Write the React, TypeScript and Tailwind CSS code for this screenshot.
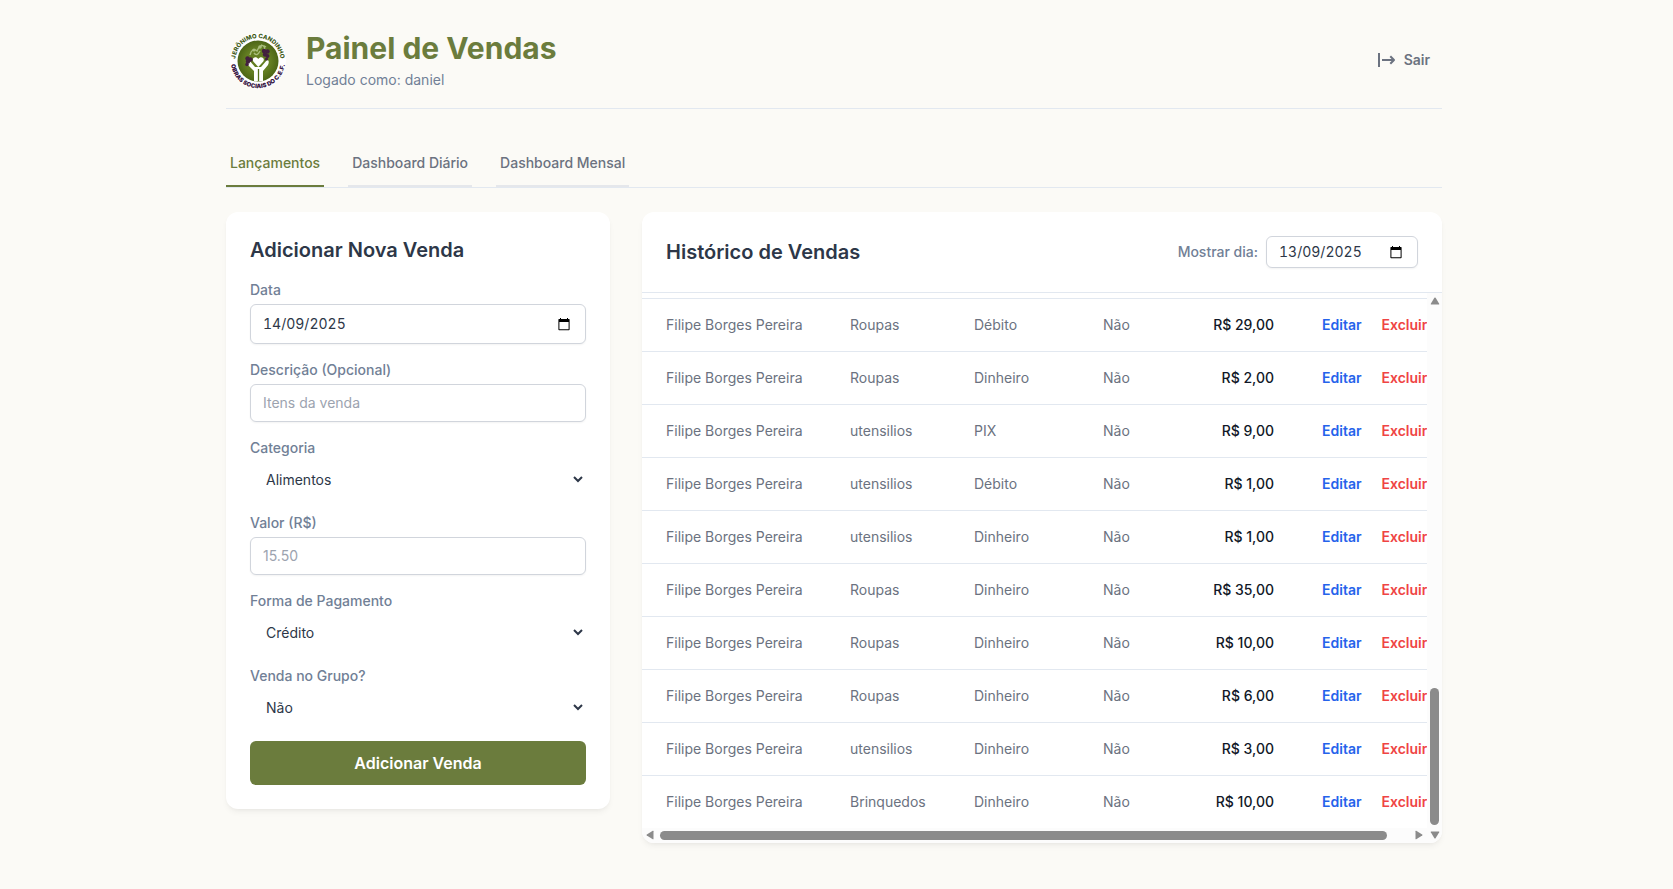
import type React from 'react';
import { useState } from 'react';
import clsx from 'clsx';

interface Sale {
  id: number;
  seller: string;
  category: string;
  payment: string;
  group: string;
  value: number;
}

const seller = 'Filipe Borges Pereira';

const sales: Sale[] = [
  { id: 1, seller, category: 'Roupas', payment: 'Débito', group: 'Não', value: 29 },
  { id: 2, seller, category: 'Roupas', payment: 'Dinheiro', group: 'Não', value: 2 },
  { id: 3, seller, category: 'utensilios', payment: 'PIX', group: 'Não', value: 9 },
  { id: 4, seller, category: 'utensilios', payment: 'Débito', group: 'Não', value: 1 },
  { id: 5, seller, category: 'utensilios', payment: 'Dinheiro', group: 'Não', value: 1 },
  { id: 6, seller, category: 'Roupas', payment: 'Dinheiro', group: 'Não', value: 35 },
  { id: 7, seller, category: 'Roupas', payment: 'Dinheiro', group: 'Não', value: 10 },
  { id: 8, seller, category: 'Roupas', payment: 'Dinheiro', group: 'Não', value: 6 },
  { id: 9, seller, category: 'utensilios', payment: 'Dinheiro', group: 'Não', value: 3 },
  { id: 10, seller, category: 'Brinquedos', payment: 'Dinheiro', group: 'Não', value: 10 },
];

const tabs = ['Lançamentos', 'Dashboard Diário', 'Dashboard Mensal'];

const formatPrice = (value: number): string => `R$ ${value.toFixed(2).replace('.', ',')}`;

function Logo(): React.ReactElement {
  return (
    <svg viewBox="0 0 64 64" className="size-16" role="img" aria-label="Jerônimo Candinho">
      <defs>
        <path id="logo-top" d="M9.6 36.5 A22.7 22.7 0 1 1 54.4 36.5" />
        <path id="logo-bottom" d="M5.2 36.5 A27 27 0 0 0 58.8 36.5" />
        <radialGradient id="logo-fill">
          <stop offset="60%" stopColor="#647e22" />
          <stop offset="100%" stopColor="#4c6516" />
        </radialGradient>
      </defs>
      <circle cx="32" cy="33" r="28" fill="#fff" />
      <circle cx="32" cy="33" r="20.5" fill="url(#logo-fill)" />
      {/* Hands */}
      <path
        d="M28 53 V43 L22 37 Q20 32 23 32 L29 39 H35 L41 32 Q44 32 42 37 L37 43 V53 Z"
        fill="#fff"
      />
      <path
        d="M32.3 39 L27.3 33.5 C25 30 30 27.5 32.3 31 C34.6 27.5 39.5 30 37.3 33.5 Z"
        fill="#fff"
      />
      <path d="M32.5 41 V53" stroke="#55701a" strokeWidth="1.3" />
      {/* Vine and grapes */}
      <path
        d="M24 27 Q26 19 31 23 Q34 15 40 19 M28 25 Q31 29 34 23 M35 17 q5 1 3 6"
        fill="none"
        stroke="#a9bd7c"
        strokeWidth="1.4"
      />
      <circle cx="28" cy="22" r="1.6" fill="#a9bd7c" />
      <circle cx="34" cy="19" r="1.8" fill="#a9bd7c" />
      <g fill="#43203f">
        <circle cx="21.5" cy="30.5" r="2.2" />
        <circle cx="24.5" cy="31.5" r="2.2" />
        <circle cx="22" cy="33.5" r="2.2" />
        <circle cx="21" cy="36.5" r="1.8" />
        <circle cx="38" cy="23" r="2.2" />
        <circle cx="41.5" cy="23.5" r="2.2" />
        <circle cx="39" cy="26.5" r="2.2" />
        <circle cx="41.5" cy="28" r="2" />
        <circle cx="40.5" cy="31" r="1.6" />
      </g>
      <text fontFamily="Inter, sans-serif" fontSize="6" fontWeight="800" fill="#3f5a17">
        <textPath href="#logo-top" startOffset="50%" textAnchor="middle">
          JERÔNIMO CANDINHO
        </textPath>
      </text>
      <text fontFamily="Inter, sans-serif" fontSize="6" fontWeight="900" fill="#35123f">
        <textPath href="#logo-bottom" startOffset="50%" textAnchor="middle">
          OBRAS SOCIAIS DO C.E.F.
        </textPath>
      </text>
    </svg>
  );
}

function LogoutIcon(): React.ReactElement {
  return (
    <svg viewBox="0 0 18 16" className="h-4 w-[18px]" fill="none" stroke="currentColor" strokeWidth="2">
      <path d="M1 1V15" />
      <path d="M4 8H16M12.3 4.3L16 8L12.3 11.7" strokeLinejoin="round" />
    </svg>
  );
}

function CalendarIcon(): React.ReactElement {
  return (
    <svg viewBox="0 0 12 13" className="h-[13px] w-3" fill="#000">
      <path
        fillRule="evenodd"
        d="M2 0H3V1H9V0H10V1H11Q11.6 1 11.6 1.6V11.4Q11.6 12.2 10.8 12.2H1.2Q.4 12.2 .4 11.4V1.6Q.4 1 1 1H2ZM1.4 4V11.2H10.6V4Z"
      />
    </svg>
  );
}

interface DateInputProp {
  id: string;
  value: string;
  className?: string;
}

function DateInput({ id, value, className }: DateInputProp): React.ReactElement {
  return (
    <div
      className={clsx(
        'flex items-center rounded-md border border-gray-300 bg-white pr-[15px] pl-3 shadow-xs',
        className
      )}
    >
      <input
        id={id}
        type="text"
        inputMode="numeric"
        defaultValue={value}
        className="w-0 min-w-0 flex-1 text-sm text-[#2d3748] tabular-nums outline-none"
      />
      <button type="button" aria-label="Abrir calendário">
        <CalendarIcon />
      </button>
    </div>
  );
}

interface SelectFieldProp {
  id: string;
  label: string;
  options: string[];
}

function SelectField({ id, label, options }: SelectFieldProp): React.ReactElement {
  return (
    <div>
      <label htmlFor={id} className="block text-sm font-medium text-[#718096]">
        {label}
      </label>
      <select id={id} className="mt-1 block h-[35px] w-full bg-white px-3 text-sm text-[#2d3748]">
        {options.map((option) => (
          <option key={option}>{option}</option>
        ))}
      </select>
    </div>
  );
}

interface TextFieldProp {
  id: string;
  label: string;
  placeholder: string;
}

function TextField({ id, label, placeholder }: TextFieldProp): React.ReactElement {
  return (
    <div>
      <label htmlFor={id} className="block text-sm font-medium text-[#718096]">
        {label}
      </label>
      <input
        id={id}
        type="text"
        placeholder={placeholder}
        className="mt-1 block w-full rounded-md border border-gray-300 bg-white px-3 py-2 text-sm text-[#2d3748] shadow-xs placeholder:text-[#9ca3af]"
      />
    </div>
  );
}

function SaleForm(): React.ReactElement {
  return (
    <form
      className="rounded-xl bg-white p-6 shadow-md shadow-black/5"
      onSubmit={(e) => e.preventDefault()}
    >
      <h2 className="mb-4 text-xl font-semibold text-[#2d3748]">Adicionar Nova Venda</h2>
      <div className="flex flex-col gap-4">
        <div>
          <label htmlFor="data" className="block text-sm font-medium text-[#718096]">
            Data
          </label>
          <DateInput id="data" value="14/09/2025" className="mt-1 h-10" />
        </div>
        <TextField id="descricao" label="Descrição (Opcional)" placeholder="Itens da venda" />
        <SelectField
          id="categoria"
          label="Categoria"
          options={['Alimentos', 'Roupas', 'utensilios', 'Brinquedos']}
        />
        <TextField id="valor" label="Valor (R$)" placeholder="15.50" />
        <SelectField
          id="pagamento"
          label="Forma de Pagamento"
          options={['Crédito', 'Débito', 'Dinheiro', 'PIX']}
        />
        <SelectField id="grupo" label="Venda no Grupo?" options={['Não', 'Sim']} />
        <button
          type="submit"
          className="w-full rounded-md bg-[#6b7c3d] px-4 py-2.5 text-base font-semibold text-white"
        >
          Adicionar Venda
        </button>
      </div>
    </form>
  );
}

function SalesTable(): React.ReactElement {
  return (
    <table className="w-[840px] table-fixed text-sm" aria-label="Histórico de Vendas">
      <colgroup>
        <col className="w-[184px]" />
        <col className="w-[124px]" />
        <col className="w-[129px]" />
        <col className="w-[94px]" />
        <col className="w-[125px]" />
        <col />
      </colgroup>
      <tbody>
        {sales.map((sale) => (
          <tr
            key={sale.id}
            className="h-[53px] border-t border-[#e2e8f0] whitespace-nowrap text-[#6b7280] last:h-[52px]"
          >
            <td className="px-6">{sale.seller}</td>
            <td className="px-6">{sale.category}</td>
            <td className="px-6">{sale.payment}</td>
            <td className="px-6">{sale.group}</td>
            <td className="px-6 text-right font-medium text-[#111827]">{formatPrice(sale.value)}</td>
            <td className="px-6">
              <button type="button" className="mr-5 font-semibold text-[#2563eb]">
                Editar
              </button>
              <button type="button" className="font-semibold text-[#ef4444]">
                Excluir
              </button>
            </td>
          </tr>
        ))}
      </tbody>
    </table>
  );
}

function SalesHistory(): React.ReactElement {
  return (
    <section className="overflow-hidden rounded-xl bg-white shadow-md shadow-black/5 lg:col-span-2">
      <div className="flex items-center justify-between border-b border-[#e2e8f0] p-6">
        <h2 className="text-xl font-semibold text-[#2d3748]">Histórico de Vendas</h2>
        <div className="flex items-center gap-2">
          <label htmlFor="dia" className="text-sm font-medium text-[#718096]">
            Mostrar dia:
          </label>
          <DateInput id="dia" value="13/09/2025" className="h-8 w-[152px]" />
        </div>
      </div>

      <div className="flex">
        <div className="min-w-0 flex-1">
          <div className="overflow-hidden pt-[5px]">
            <SalesTable />
          </div>
          {/* Horizontal scrollbar */}
          <div className="flex h-[15px] items-center bg-[#fcfcfc] px-1 text-[#8b8b8b]">
            <svg viewBox="0 0 8 10" className="h-2.5 w-2" fill="currentColor">
              <path d="M7.5 1.2V8.8Q7.5 9.6 6.8 9.2L.8 5.6Q.1 5 .8 4.4L6.8.8Q7.5.4 7.5 1.2Z" />
            </svg>
            <div className="mx-1.5 flex-1">
              <div className="h-[9px] w-[97%] rounded-full bg-[#8b8b8b]" />
            </div>
            <svg viewBox="0 0 8 10" className="h-2.5 w-2" fill="currentColor">
              <path d="M.5 1.2V8.8Q.5 9.6 1.2 9.2L7.2 5.6Q7.9 5 7.2 4.4L1.2.8Q.5.4.5 1.2Z" />
            </svg>
          </div>
        </div>
        {/* Vertical scrollbar */}
        <div className="flex w-[15px] flex-col items-center bg-[#fcfcfc] py-1 text-[#8b8b8b]">
          <svg viewBox="0 0 10 8" className="h-2 w-2.5" fill="currentColor">
            <path d="M1.2 7.5H8.8Q9.6 7.5 9.2 6.8L5.6.8Q5 .1 4.4.8L.8 6.8Q.4 7.5 1.2 7.5Z" />
          </svg>
          <div className="my-1.5 flex flex-1 flex-col justify-end">
            <div className="h-[137px] w-[9px] rounded-full bg-[#8b8b8b]" />
          </div>
          <svg viewBox="0 0 10 8" className="h-2 w-2.5" fill="currentColor">
            <path d="M1.2.5H8.8Q9.6.5 9.2 1.2L5.6 7.2Q5 7.9 4.4 7.2L.8 1.2Q.4.5 1.2.5Z" />
          </svg>
        </div>
      </div>
    </section>
  );
}

function App(): React.ReactElement {
  const [activeTab, setActiveTab] = useState(tabs[0]);

  return (
    <div className="min-h-screen bg-[#fbfaf6] pr-[5px] font-['Inter',sans-serif]">
      <div className="mx-auto max-w-7xl px-8 pt-7 pb-11">
        {/* Header */}
        <header className="flex items-center justify-between border-b border-[#e2e8f0] pb-4">
          <div className="flex items-center gap-4">
            <Logo />
            <div>
              <h1 className="text-3xl font-bold text-[#6b7c3d]">Painel de Vendas</h1>
              <p className="mt-1 text-sm text-[#718096]">Logado como: daniel</p>
            </div>
          </div>
          <button
            type="button"
            className="flex items-center gap-2 px-3 py-2 text-sm font-semibold text-[#6b7280]"
          >
            <LogoutIcon />
            Sair
          </button>
        </header>

        {/* Tabs */}
        <nav className="mt-8 flex gap-6 border-b border-[#e2e8f0]">
          {tabs.map((tab) => (
            <button
              key={tab}
              type="button"
              onClick={() => setActiveTab(tab)}
              className={clsx(
                'border-b-2 px-1 py-3 text-sm font-medium',
                tab === activeTab
                  ? 'border-[#6b7c3d] text-[#6b7c3d]'
                  : 'border-[#e5e7eb] text-[#6b7280]'
              )}
            >
              {tab}
            </button>
          ))}
        </nav>

        <main className="mt-6 grid items-start gap-8 lg:grid-cols-3">
          <SaleForm />
          <SalesHistory />
        </main>
      </div>
    </div>
  );
}

export default App;
